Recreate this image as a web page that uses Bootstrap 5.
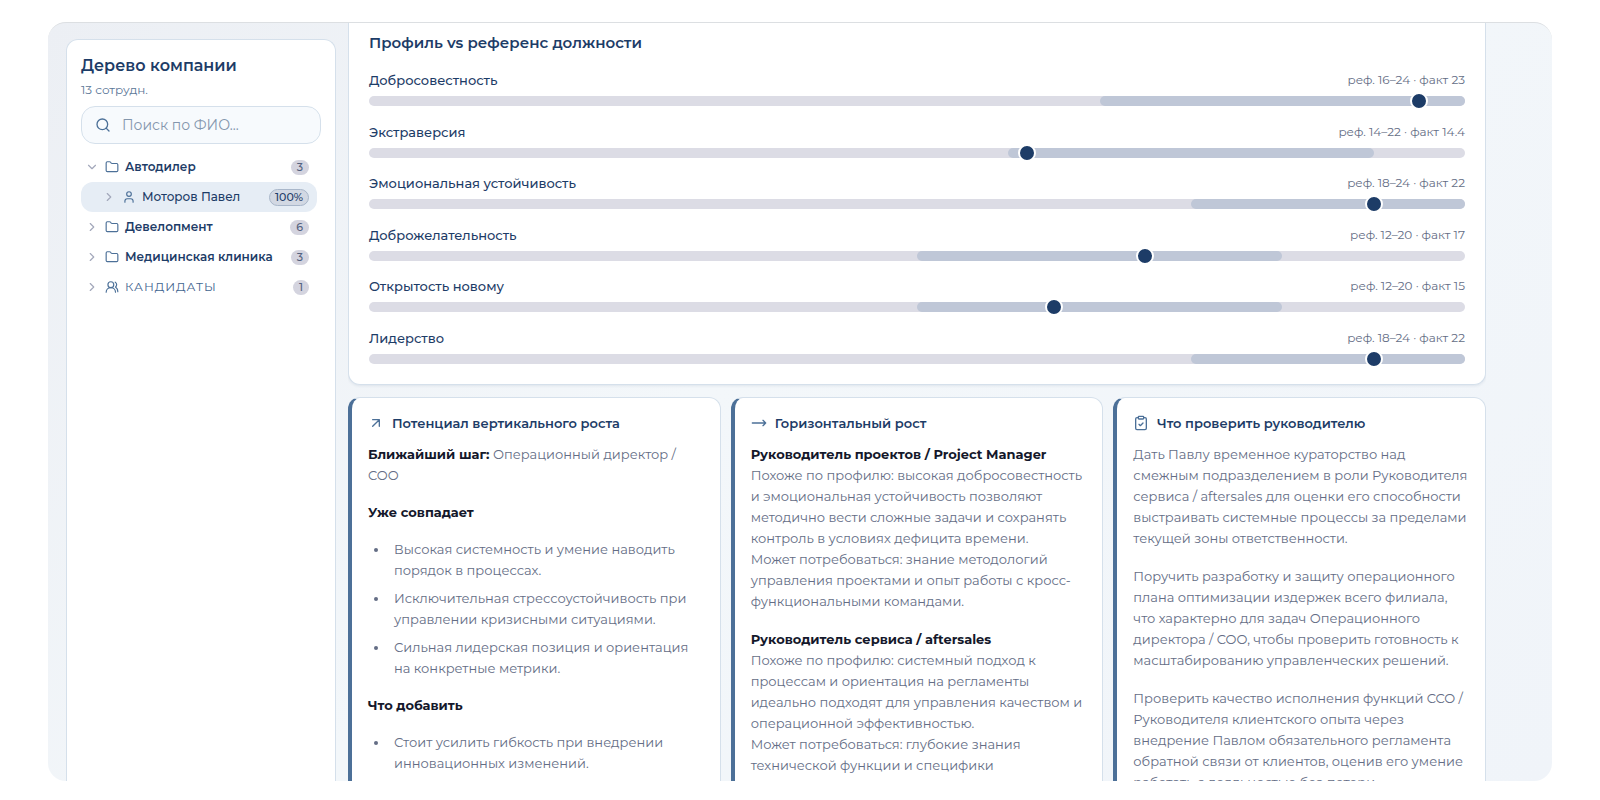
<!DOCTYPE html>
<html lang="ru">
<head>
<meta charset="utf-8">
<meta name="viewport" content="width=device-width, initial-scale=1">
<title>Дерево компании</title>
<link href="https://cdn.jsdelivr.net/npm/bootstrap@5.3.0/dist/css/bootstrap.min.css" rel="stylesheet">
<style>
  :root { --navy: #1d3c67; --steel: #4c7098; --line: #d5e0eb; --muted: #646d85; }
  body { font-family: Montserrat, Inter, "Noto Sans", sans-serif; font-size: 13px; line-height: 21px; color: var(--muted); background: #fff; }
  svg { fill: none; stroke: currentColor; stroke-width: 2; stroke-linecap: round; stroke-linejoin: round; flex: none; }
  .page { height: 100vh; padding: 22px 48px 19px; }
  .shell { height: 100%; border-top: 1px solid #dcdfe2; border-radius: 18px; background: linear-gradient(135deg, #eceff4 0%, #f3f7fa 45%, #f0f4f9 100%); padding: 0 66px 0 18px; gap: 12px; }
  .panel { background: #fff; border: 1px solid var(--line); border-radius: 12px; }
  .tree { width: 270px; flex: none; margin-top: 16px; padding: 14px 14px 0; border-bottom: 0; border-radius: 12px 12px 0 0; }
  .tree-title { font-size: 16px; line-height: 24px; font-weight: 600; color: var(--navy); }
  .tree-count { font-size: 12px; line-height: 24px; color: #5b7697; }
  .search { height: 38px; border: 1px solid var(--line); border-radius: 14px; background: #f7fafd; padding: 0 13px; gap: 11px; color: var(--steel); margin: 4px 0 8px; }
  .search input { border: 0; background: none; outline: 0; width: 100%; min-width: 0; padding: 0; font-size: 14px; color: var(--navy); }
  .search input::placeholder { color: #8496ad; opacity: 1; }
  .node { width: 100%; height: 30px; border: 0; background: none; padding: 0 8px 0 4px; gap: 6px; font-size: 12px; line-height: 20px; font-weight: 600; color: var(--navy); text-align: left; }
  .node svg { color: var(--steel); }
  .node svg.chev { color: #a3a8bb; }
  .node-child { padding-left: 21px; font-weight: 500; background: #e6edf5; border-radius: 12px; }
  .node-group { font-weight: 400; color: #3f648f; letter-spacing: 1px; }
  .tally { background: #d4d4df; color: #53627f; border-radius: 8px; font-size: 11px; line-height: 15px; padding: 0 6px; font-weight: 500; letter-spacing: 0; }
  .match { background: #d2d8e3; color: var(--navy); border: 1px solid #a9b7ca; border-radius: 9px; font-size: 11px; line-height: 15px; padding: 0 5px; font-weight: 500; }
  .detail { min-width: 0; flex: 1; overflow: hidden; gap: 12px; }
  .profile { flex: none; border-top: 0; border-radius: 0 0 12px 12px; padding: 8px 20px 19px; box-shadow: 0 1px 3px #1d3c6718; }
  .profile h2 { font-size: 15px; line-height: 24px; font-weight: 600; color: var(--navy); margin: 0 0 14px; }
  .trait { height: 52px; }
  .trait:nth-child(odd) { height: 51px; }
  .trait:last-child { height: 38px; }
  .trait-name { color: var(--navy); font-weight: 500; line-height: 22px; }
  .trait-ref { font-size: 12px; line-height: 22px; }
  .scale { height: 10px; border-radius: 5px; background: #dcdce5; margin-top: 5px; }
  .scale-ref { height: 10px; border-radius: 5px; background: #bfc7d7; }
  .scale-dot { position: absolute; top: -4px; width: 18px; height: 18px; margin-left: -9px; border: 2px solid #fff; border-radius: 50%; background: var(--navy); }
  .growth { gap: 10px; flex: none; }
  .growth article { flex: 1 1 0; min-width: 0; border-left: 4px solid var(--steel); border-radius: 12px; padding: 14px 16px; }
  .growth h3 { font-size: 13px; line-height: 22px; font-weight: 600; color: var(--navy); gap: 8px; margin: 0 0 10px; }
  .growth h3 svg { color: var(--steel); }
  .growth p { margin: 0 0 17px; white-space: nowrap; }
  .growth .step, .growth .sub { margin-bottom: 16px; }
  .growth ul { margin: 0 0 16px; padding-left: 21px; white-space: nowrap; }
  .growth li { padding-left: 5px; }
  .growth li + li { margin-top: 7px; }
  .growth strong { color: #14182b; font-weight: 700; }
</style>
</head>
<body>
<svg width="0" height="0" class="position-absolute" aria-hidden="true">
  <symbol id="folder" viewBox="0 0 24 24"><path d="M20 20a2 2 0 0 0 2-2V8a2 2 0 0 0-2-2h-7.900a2 2 0 0 1-1.690-.9L9.600 3.900A2 2 0 0 0 7.930 3H4a2 2 0 0 0-2 2v13a2 2 0 0 0 2 2Z"/></symbol>
  <symbol id="right" viewBox="0 0 24 24"><path d="m9 18 6-6-6-6"/></symbol>
  <symbol id="down" viewBox="0 0 24 24"><path d="m6 9 6 6 6-6"/></symbol>
</svg>
<div class="page">
  <div class="shell d-flex overflow-hidden">
    <aside class="tree panel">
      <div class="tree-title">Дерево компании</div>
      <div class="tree-count">13 сотрудн.</div>
      <label class="search d-flex align-items-center">
        <svg width="16" height="16" viewBox="0 0 24 24"><circle cx="11" cy="11" r="8"/><path d="m21 21-4.300-4.300"/></svg>
        <input type="text" placeholder="Поиск по ФИО..." aria-label="Поиск по ФИО">
      </label>
      <nav class="pe-1">
        <button class="node d-flex align-items-center"><svg class="chev" width="14" height="14"><use href="#down"/></svg><svg width="14" height="14"><use href="#folder"/></svg><span class="flex-fill">Автодилер</span><span class="tally">3</span></button>
        <button class="node node-child d-flex align-items-center"><svg class="chev" width="14" height="14"><use href="#right"/></svg><svg width="14" height="14" viewBox="0 0 24 24"><circle cx="12" cy="7" r="4"/><path d="M19 21v-2a4 4 0 0 0-4-4H9a4 4 0 0 0-4 4v2"/></svg><span class="flex-fill">Моторов Павел</span><span class="match">100%</span></button>
        <button class="node d-flex align-items-center"><svg class="chev" width="14" height="14"><use href="#right"/></svg><svg width="14" height="14"><use href="#folder"/></svg><span class="flex-fill">Девелопмент</span><span class="tally">6</span></button>
        <button class="node d-flex align-items-center"><svg class="chev" width="14" height="14"><use href="#right"/></svg><svg width="14" height="14"><use href="#folder"/></svg><span class="flex-fill">Медицинская клиника</span><span class="tally">3</span></button>
        <button class="node node-group d-flex align-items-center"><svg class="chev" width="14" height="14"><use href="#right"/></svg><svg width="14" height="14" viewBox="0 0 24 24"><path d="M18 21a8 8 0 0 0-16 0"/><circle cx="10" cy="8" r="5"/><path d="M22 20c0-3.370-2-6.500-4-8a5 5 0 0 0-.45-8.300"/></svg><span class="flex-fill">КАНДИДАТЫ</span><span class="tally">1</span></button>
      </nav>
    </aside>

    <main class="detail d-flex flex-column">
      <section class="profile panel">
        <h2>Профиль vs референс должности</h2>
        <div class="trait"><div class="d-flex justify-content-between"><span class="trait-name">Добросовестность</span><span class="trait-ref">реф. 16–24 · факт 23</span></div>
          <div class="scale position-relative"><div class="scale-ref" style="margin-left:66.667%;width:33.333%"></div><span class="scale-dot" style="left:95.833%"></span></div></div>
        <div class="trait"><div class="d-flex justify-content-between"><span class="trait-name">Экстраверсия</span><span class="trait-ref">реф. 14–22 · факт 14.4</span></div>
          <div class="scale position-relative"><div class="scale-ref" style="margin-left:58.333%;width:33.333%"></div><span class="scale-dot" style="left:60%"></span></div></div>
        <div class="trait"><div class="d-flex justify-content-between"><span class="trait-name">Эмоциональная устойчивость</span><span class="trait-ref">реф. 18–24 · факт 22</span></div>
          <div class="scale position-relative"><div class="scale-ref" style="margin-left:75%;width:25%"></div><span class="scale-dot" style="left:91.667%"></span></div></div>
        <div class="trait"><div class="d-flex justify-content-between"><span class="trait-name">Доброжелательность</span><span class="trait-ref">реф. 12–20 · факт 17</span></div>
          <div class="scale position-relative"><div class="scale-ref" style="margin-left:50%;width:33.333%"></div><span class="scale-dot" style="left:70.833%"></span></div></div>
        <div class="trait"><div class="d-flex justify-content-between"><span class="trait-name">Открытость новому</span><span class="trait-ref">реф. 12–20 · факт 15</span></div>
          <div class="scale position-relative"><div class="scale-ref" style="margin-left:50%;width:33.333%"></div><span class="scale-dot" style="left:62.5%"></span></div></div>
        <div class="trait"><div class="d-flex justify-content-between"><span class="trait-name">Лидерство</span><span class="trait-ref">реф. 18–24 · факт 22</span></div>
          <div class="scale position-relative"><div class="scale-ref" style="margin-left:75%;width:25%"></div><span class="scale-dot" style="left:91.667%"></span></div></div>
      </section>

      <section class="growth d-flex">
        <article class="panel">
          <h3 class="d-flex align-items-center"><svg width="16" height="16" viewBox="0 0 24 24"><path d="M7 7h10v10M7 17 17 7"/></svg>Потенциал вертикального роста</h3>
          <p class="step"><strong>Ближайший шаг:</strong> Операционный директор /<br>COO</p>
          <p class="sub"><strong>Уже совпадает</strong></p>
          <ul>
            <li>Высокая системность и умение наводить<br>порядок в процессах.</li>
            <li>Исключительная стрессоустойчивость при<br>управлении кризисными ситуациями.</li>
            <li>Сильная лидерская позиция и ориентация<br>на конкретные метрики.</li>
          </ul>
          <p class="sub"><strong>Что добавить</strong></p>
          <ul>
            <li>Стоит усилить гибкость при внедрении<br>инновационных изменений.</li>
          </ul>
        </article>
        <article class="panel">
          <h3 class="d-flex align-items-center"><svg width="16" height="16" viewBox="0 0 24 24"><path d="m18 8 4 4-4 4M2 12h20"/></svg>Горизонтальный рост</h3>
          <p><strong>Руководитель проектов / Project Manager</strong><br>Похоже по профилю: высокая добросовестность<br>и эмоциональная устойчивость позволяют<br>методично вести сложные задачи и сохранять<br>контроль в условиях дефицита времени.<br>Может потребоваться: знание методологий<br>управления проектами и опыт работы с кросс-<br>функциональными командами.</p>
          <p><strong>Руководитель сервиса / aftersales</strong><br>Похоже по профилю: системный подход к<br>процессам и ориентация на регламенты<br>идеально подходят для управления качеством и<br>операционной эффективностью.<br>Может потребоваться: глубокие знания<br>технической функции и специфики</p>
        </article>
        <article class="panel">
          <h3 class="d-flex align-items-center"><svg width="16" height="16" viewBox="0 0 24 24"><rect x="8" y="2" width="8" height="4" rx="1"/><path d="M16 4h2a2 2 0 0 1 2 2v14a2 2 0 0 1-2 2H6a2 2 0 0 1-2-2V6a2 2 0 0 1 2-2h2M9 14l2 2 4-4"/></svg>Что проверить руководителю</h3>
          <p>Дать Павлу временное кураторство над<br>смежным подразделением в роли Руководителя<br>сервиса / aftersales для оценки его способности<br>выстраивать системные процессы за пределами<br>текущей зоны ответственности.</p>
          <p>Поручить разработку и защиту операционного<br>плана оптимизации издержек всего филиала,<br>что характерно для задач Операционного<br>директора / COO, чтобы проверить готовность к<br>масштабированию управленческих решений.</p>
          <p>Проверить качество исполнения функций CCO /<br>Руководителя клиентского опыта через<br>внедрение Павлом обязательного регламента<br>обратной связи от клиентов, оценив его умение<br>работать с лояльностью без потери</p>
        </article>
      </section>
    </main>
  </div>
</div>
<script src="https://cdn.jsdelivr.net/npm/bootstrap@5.3.0/dist/js/bootstrap.bundle.min.js"></script>
</body>
</html>
